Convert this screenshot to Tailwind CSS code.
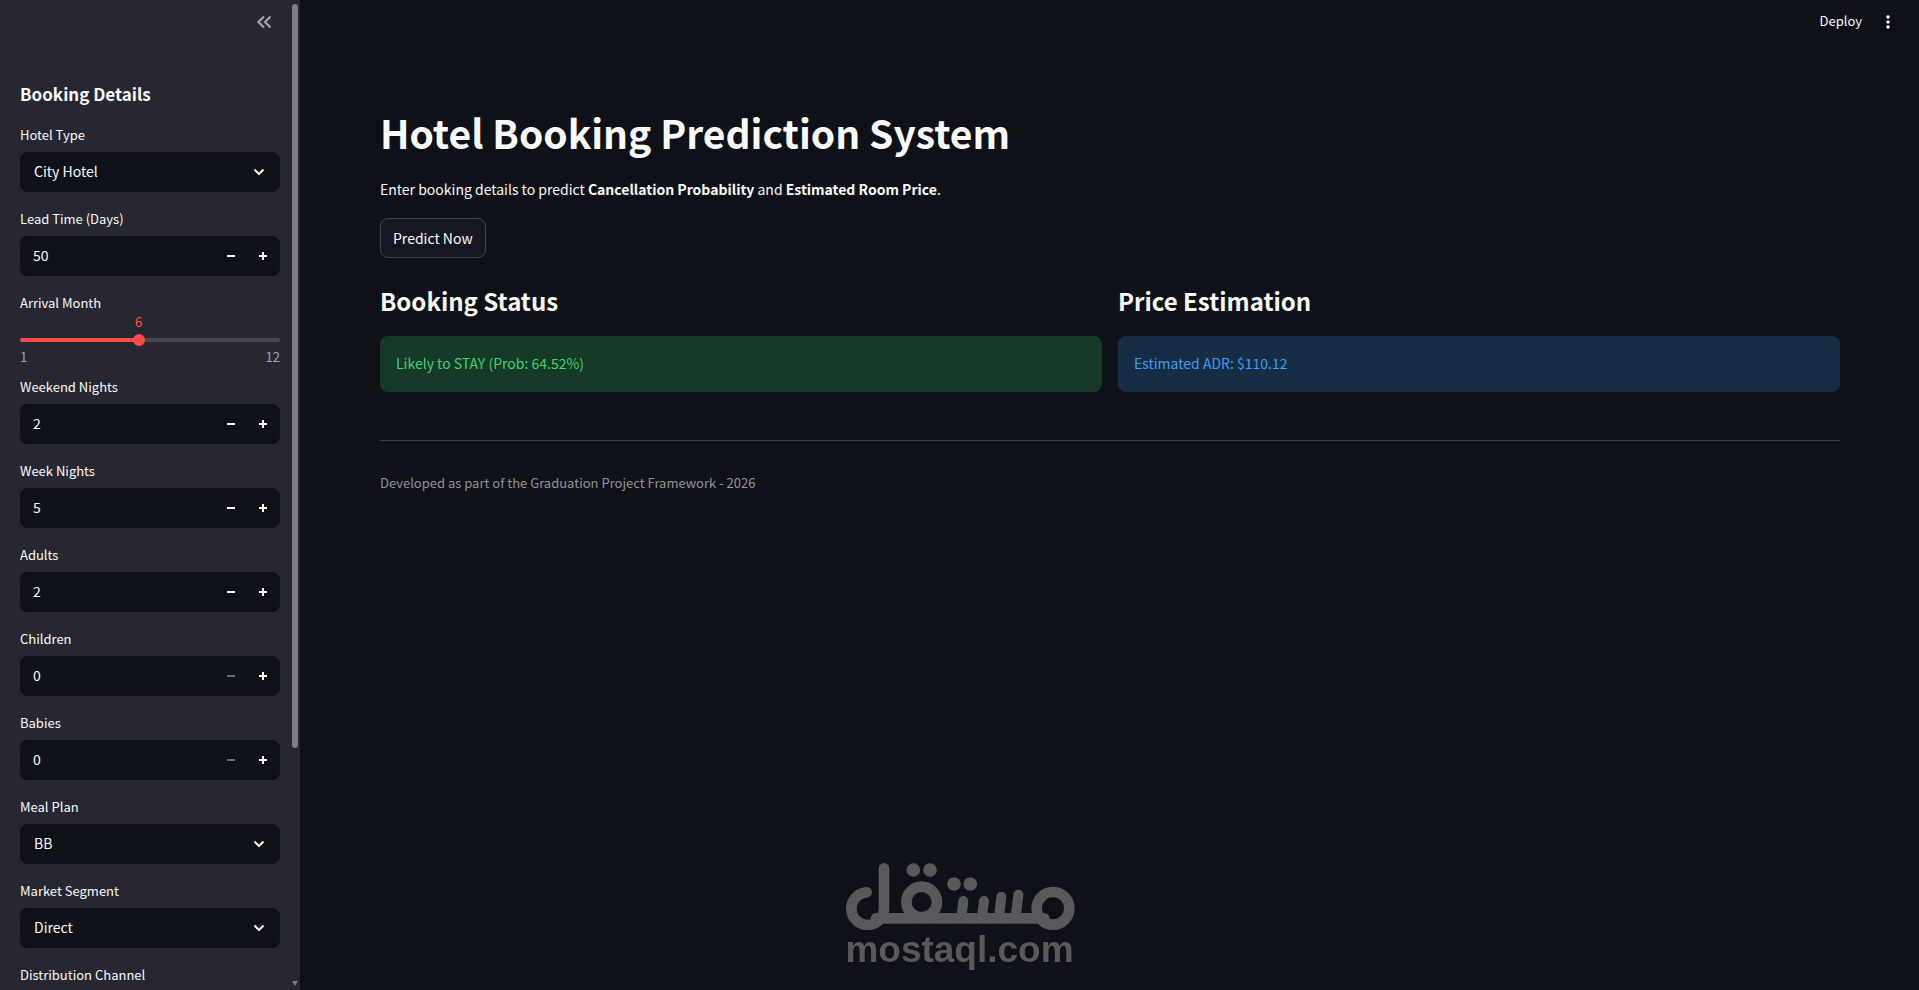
<!DOCTYPE html>
<html lang="en">

<head>
  <meta charset="UTF-8">
  <meta name="viewport" content="width=device-width, initial-scale=1.0">
  <title>Hotel Booking Prediction System</title>
  <script src="https://cdn.jsdelivr.net/npm/@tailwindcss/browser@4"></script>
</head>

<body class="bg-[#0e1117] text-[#fafafa] font-['Noto_Sans_CJK_SC',sans-serif] text-[14px] leading-6">
  <!-- shared icons -->
  <svg class="hidden">
    <symbol id="chevron" viewBox="0 0 12 12">
      <path d="M1.5 3.5 6 8l4.5-4.5" fill="none" stroke="currentColor" stroke-width="2" />
    </symbol>
    <symbol id="minus" viewBox="0 0 8 8">
      <path d="M0 3h8v2H0z" fill="currentColor" />
    </symbol>
    <symbol id="plus" viewBox="0 0 8 8">
      <path d="M0 3h3V0h2v3h3v2H5v3H3V5H0z" fill="currentColor" />
    </symbol>
  </svg>

  <div class="flex h-screen overflow-hidden">
    <!-- Sidebar -->
    <aside class="relative w-[300px] shrink-0 h-full overflow-hidden bg-[#262730] px-5">
      <div class="flex justify-end h-11 items-center pr-2">
        <button type="button" aria-label="Collapse sidebar" class="text-[#a3a4a9]">
          <svg class="w-4 h-4" viewBox="0 0 16 16" fill="none" stroke="currentColor" stroke-width="2.200">
            <path d="M8 2.5 2.5 8 8 13.5M14.5 2.5 9 8l5.5 5.500" />
          </svg>
        </button>
      </div>

      <h2 class="mt-9 mb-4 text-[17px] leading-7 font-semibold">Booking Details</h2>

      <form class="flex flex-col gap-4">
        <div>
          <label for="hotelType" class="block mb-1.5 text-[13px] leading-[22px]">Hotel Type</label>
          <div class="relative">
            <select id="hotelType" class="appearance-none w-full h-10 pl-3.5 pr-10 pb-0.5 rounded-lg bg-[#0e1117]">
              <option>City Hotel</option>
              <option>Resort Hotel</option>
            </select>
            <svg class="absolute right-[15px] top-3.5 w-3 h-3 pointer-events-none"><use href="#chevron" /></svg>
          </div>
        </div>

        <div>
          <label for="leadTime" class="block mb-1.5 text-[13px] leading-[22px]">Lead Time (Days)</label>
          <div class="flex h-10 pr-px rounded-lg bg-[#0e1117] overflow-hidden">
            <input type="number" id="leadTime" value="50" min="0" class="flex-1 min-w-0 pl-[13px] pb-0.5 bg-transparent outline-none [appearance:textfield]">
            <button type="button" aria-label="Decrease lead time" class="w-8 flex items-center justify-center"><svg class="w-2 h-2"><use href="#minus" /></svg></button>
            <button type="button" aria-label="Increase lead time" class="w-8 flex items-center justify-center"><svg class="w-2 h-2"><use href="#plus" /></svg></button>
          </div>
        </div>

        <div class="h-[68px]">
          <label for="arrivalMonth" class="block text-[13px] leading-[22px]">Arrival Month</label>
          <div class="mx-1.5">
            <output for="arrivalMonth" class="block w-4 -ml-2 text-center text-[13px] leading-4 text-[#ff4b4b]">6</output>
          </div>
          <input type="range" id="arrivalMonth" min="1" max="12" value="6"
            class="block appearance-none w-full h-1 mt-2 mb-1 rounded-full bg-[linear-gradient(to_right,#ff4b4b_46%,#464951_46%)] [&::-webkit-slider-thumb]:appearance-none [&::-webkit-slider-thumb]:w-3 [&::-webkit-slider-thumb]:h-3 [&::-webkit-slider-thumb]:rounded-full [&::-webkit-slider-thumb]:bg-[#ff4b4b]">
          <div class="flex justify-between text-[13px] leading-[22px] text-[#a3a4a9]"><span>1</span><span>12</span></div>
        </div>

        <div>
          <label for="weekendNights" class="block mb-1.5 text-[13px] leading-[22px]">Weekend Nights</label>
          <div class="flex h-10 pr-px rounded-lg bg-[#0e1117] overflow-hidden">
            <input type="number" id="weekendNights" value="2" min="0" class="flex-1 min-w-0 pl-[13px] pb-0.5 bg-transparent outline-none [appearance:textfield]">
            <button type="button" aria-label="Decrease weekend nights" class="w-8 flex items-center justify-center"><svg class="w-2 h-2"><use href="#minus" /></svg></button>
            <button type="button" aria-label="Increase weekend nights" class="w-8 flex items-center justify-center"><svg class="w-2 h-2"><use href="#plus" /></svg></button>
          </div>
        </div>

        <div>
          <label for="weekNights" class="block mb-1.5 text-[13px] leading-[22px]">Week Nights</label>
          <div class="flex h-10 pr-px rounded-lg bg-[#0e1117] overflow-hidden">
            <input type="number" id="weekNights" value="5" min="0" class="flex-1 min-w-0 pl-[13px] pb-0.5 bg-transparent outline-none [appearance:textfield]">
            <button type="button" aria-label="Decrease week nights" class="w-8 flex items-center justify-center"><svg class="w-2 h-2"><use href="#minus" /></svg></button>
            <button type="button" aria-label="Increase week nights" class="w-8 flex items-center justify-center"><svg class="w-2 h-2"><use href="#plus" /></svg></button>
          </div>
        </div>

        <div>
          <label for="adults" class="block mb-1.5 text-[13px] leading-[22px]">Adults</label>
          <div class="flex h-10 pr-px rounded-lg bg-[#0e1117] overflow-hidden">
            <input type="number" id="adults" value="2" min="0" class="flex-1 min-w-0 pl-[13px] pb-0.5 bg-transparent outline-none [appearance:textfield]">
            <button type="button" aria-label="Decrease adults" class="w-8 flex items-center justify-center"><svg class="w-2 h-2"><use href="#minus" /></svg></button>
            <button type="button" aria-label="Increase adults" class="w-8 flex items-center justify-center"><svg class="w-2 h-2"><use href="#plus" /></svg></button>
          </div>
        </div>

        <div>
          <label for="children" class="block mb-1.5 text-[13px] leading-[22px]">Children</label>
          <div class="flex h-10 pr-px rounded-lg bg-[#0e1117] overflow-hidden">
            <input type="number" id="children" value="0" min="0" class="flex-1 min-w-0 pl-[13px] pb-0.5 bg-transparent outline-none [appearance:textfield]">
            <button type="button" aria-label="Decrease children" disabled class="w-8 flex items-center justify-center disabled:text-[#66686c]"><svg class="w-2 h-2"><use href="#minus" /></svg></button>
            <button type="button" aria-label="Increase children" class="w-8 flex items-center justify-center"><svg class="w-2 h-2"><use href="#plus" /></svg></button>
          </div>
        </div>

        <div>
          <label for="babies" class="block mb-1.5 text-[13px] leading-[22px]">Babies</label>
          <div class="flex h-10 pr-px rounded-lg bg-[#0e1117] overflow-hidden">
            <input type="number" id="babies" value="0" min="0" class="flex-1 min-w-0 pl-[13px] pb-0.5 bg-transparent outline-none [appearance:textfield]">
            <button type="button" aria-label="Decrease babies" disabled class="w-8 flex items-center justify-center disabled:text-[#66686c]"><svg class="w-2 h-2"><use href="#minus" /></svg></button>
            <button type="button" aria-label="Increase babies" class="w-8 flex items-center justify-center"><svg class="w-2 h-2"><use href="#plus" /></svg></button>
          </div>
        </div>

        <div>
          <label for="mealPlan" class="block mb-1.5 text-[13px] leading-[22px]">Meal Plan</label>
          <div class="relative">
            <select id="mealPlan" class="appearance-none w-full h-10 pl-3.5 pr-10 pb-0.5 rounded-lg bg-[#0e1117]">
              <option>BB</option>
            </select>
            <svg class="absolute right-[15px] top-3.5 w-3 h-3 pointer-events-none"><use href="#chevron" /></svg>
          </div>
        </div>

        <div>
          <label for="marketSegment" class="block mb-1.5 text-[13px] leading-[22px]">Market Segment</label>
          <div class="relative">
            <select id="marketSegment" class="appearance-none w-full h-10 pl-3.5 pr-10 pb-0.5 rounded-lg bg-[#0e1117]">
              <option>Direct</option>
            </select>
            <svg class="absolute right-[15px] top-3.5 w-3 h-3 pointer-events-none"><use href="#chevron" /></svg>
          </div>
        </div>

        <div>
          <label for="distributionChannel" class="block mb-1.5 text-[13px] leading-[22px]">Distribution Channel</label>
          <select id="distributionChannel" class="appearance-none w-full h-10 pl-3.5 pr-10 pb-0.5 rounded-lg bg-[#0e1117]">
            <option>Direct</option>
          </select>
        </div>
      </form>

      <!-- scrollbar -->
      <div class="absolute inset-y-0 right-0.5 w-1.5 pt-1 pb-[3px] flex flex-col justify-between">
        <div class="h-[75.7%] rounded-full bg-[#7d7d83]"></div>
        <svg class="w-1.5 h-1.5" viewBox="0 0 6 6"><path d="M0 0h6L3 5z" fill="#7d7d83" /></svg>
      </div>
    </aside>

    <!-- Main -->
    <div class="flex-1 min-w-0">
      <header class="flex justify-end items-center gap-5 h-11 pr-[25px]">
        <button type="button" class="pb-0.5 text-[13px] leading-[22px]">Deploy</button>
        <button type="button" aria-label="Menu">
          <svg class="w-3 h-4" viewBox="0 0 12 16" fill="currentColor">
            <circle cx="6" cy="3" r="1.700" />
            <circle cx="6" cy="8" r="1.700" />
            <circle cx="6" cy="13" r="1.700" />
          </svg>
        </button>
      </header>

      <main class="pl-20 pr-[79px] pt-[60px]">
        <h1 class="text-[39px] leading-[56px] font-bold">Hotel Booking Prediction System</h1>
        <p class="mt-[17px] mb-[17px]">Enter booking details to predict <strong class="font-semibold">Cancellation Probability</strong> and <strong class="font-semibold">Estimated Room Price</strong>.</p>
        <button type="button" class="h-10 px-3 rounded-lg border border-[#41444b] bg-[#131720]">Predict Now</button>

        <div class="grid grid-cols-2 gap-4 mt-6">
          <section>
            <h2 class="text-[24px] leading-[38px] font-semibold mb-4">Booking Status</h2>
            <div class="px-4 pt-[15px] pb-[17px] rounded-lg bg-[#173928] text-[#3dd56d]">Likely to STAY (Prob: 64.52%)</div>
          </section>
          <section>
            <h2 class="text-[24px] leading-[38px] font-semibold mb-4">Price Estimation</h2>
            <div class="px-4 pt-[15px] pb-[17px] rounded-lg bg-[#172d43] text-[#3d9df3]">Estimated ADR: $110.12</div>
          </section>
        </div>

        <hr class="mt-12 mb-8 border-[#3b3e44]">
        <footer class="text-[13px] leading-5 text-[#929397]">Developed as part of the Graduation Project Framework - 2026</footer>
      </main>
    </div>
  </div>

  <!-- Watermark -->
  <div class="fixed bottom-5 left-1/2 -translate-x-1/2 text-[#58595c] pointer-events-none">
    <svg class="block w-[230px] h-[67px]" viewBox="42 42 690 201" fill="none" stroke="currentColor" stroke-width="32" stroke-linecap="round">
      <path d="M107 130A49 49 0 1 0 159 178V58" />
      <path d="M135 208H640" />
      <circle cx="272" cy="159" r="46" />
      <circle cx="666" cy="178" r="49" />
      <path d="M397 156 391 205M459 156 453 205M511 143 504 205M562 137 554 205" stroke-width="30" />
      <g fill="currentColor" stroke="none">
        <circle cx="247" cy="63" r="20.500" />
        <circle cx="297" cy="63" r="20.500" />
        <circle cx="369" cy="105" r="20.500" />
        <circle cx="418" cy="105" r="20.500" />
      </g>
    </svg>
    <div class="text-[37px] leading-10 font-bold font-['Liberation_Sans',sans-serif] text-center">mostaql.com</div>
  </div>

  <script>
    // keep the month value above the slider thumb
    const slider = document.getElementById('arrivalMonth');
    const month = document.querySelector('output');

    function moveMonth() {
      const ratio = (slider.value - slider.min) / (slider.max - slider.min);
      month.textContent = slider.value;
      month.style.position = 'relative';
      month.style.left = ratio * 100 + '%';
    }

    slider.addEventListener('input', moveMonth);
    moveMonth();
  </script>
</body>

</html>
